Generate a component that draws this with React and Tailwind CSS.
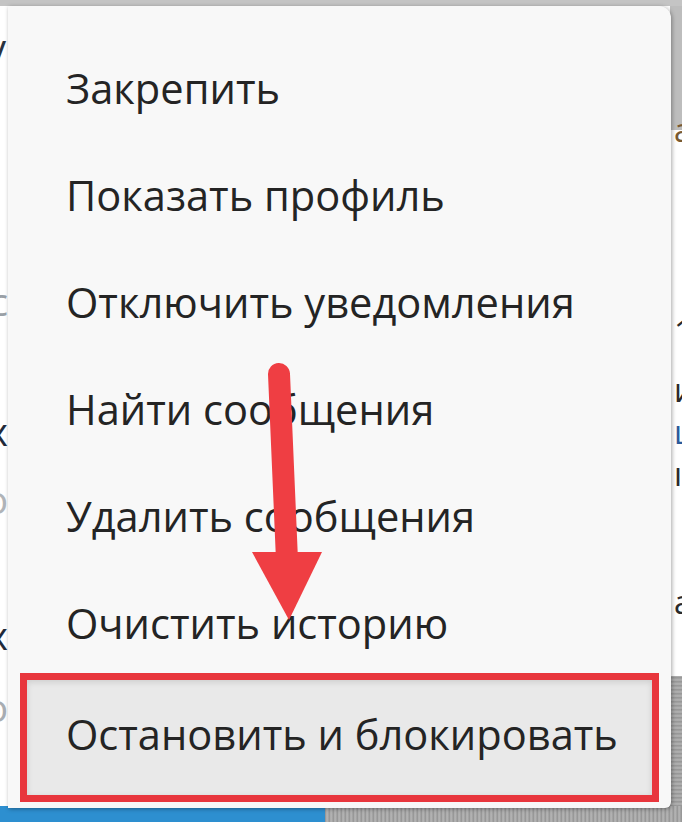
import React from 'react';

const items = [
    'Закрепить',
    'Показать профиль',
    'Отключить уведомления',
    'Найти сообщения',
    'Удалить сообщения',
    'Очистить историю',
];

const font = { fontFamily: '"Open Sans", "Noto Sans", sans-serif' };

const App = () => {
    return (
        <div className="relative w-[682px] h-[822px] overflow-hidden bg-white" style={font}>
            {/* page behind the menu */}
            <div className="flex flex-col h-full">
                <div className="h-[6px] bg-[#c4c4c4]"></div>
                <div className="flex flex-1">
                    <div className="w-[10px] flex flex-col items-end overflow-hidden text-[38px] leading-none">
                        <span className="mt-[22px] mr-[4px] text-[#2a3340]">у</span>
                        <span className="mt-[216px] mr-[2px] text-[#9aa0a6]">с</span>
                        <span className="mt-[92px] mr-[2px] text-[#1f2a3a]">х</span>
                        <span className="mt-[30px] mr-[2px] text-[#b0b4b8]">о</span>
                        <span className="mt-[98px] mr-[2px] text-[#1f2a3a]">х</span>
                        <span className="mt-[34px] mr-[2px] text-[#a8adb2]">о</span>
                    </div>
                    <div className="flex-1"></div>
                    <div className="w-[12px] flex flex-col overflow-hidden text-[32px] leading-none">
                        <div className="h-[124px] bg-[#bdbdbd]"></div>
                        <span className="-mt-[16px] ml-[4px] text-[#7a5a30]">а</span>
                        <span className="mt-[170px] ml-[4px] text-[#2a2a2a]">1</span>
                        <span className="mt-[26px] ml-[4px] text-[#2a2a2a]">и</span>
                        <span className="mt-[10px] ml-[4px] text-[#2b5a9a]">ц</span>
                        <span className="mt-[10px] ml-[4px] text-[#2a2a2a]">ı</span>
                        <span className="mt-[96px] ml-[4px] text-[#2a2a2a]">а</span>
                        <div className="mt-auto h-[130px] bg-[repeating-linear-gradient(0deg,#8f8f8f_0px,#b5b5b5_2px,#9a9a9a_4px)]"></div>
                    </div>
                </div>
                <div className="flex h-[16px]">
                    <div className="w-[325px] bg-[#2d8fd0]"></div>
                    <div className="flex-1 bg-[repeating-linear-gradient(90deg,#8d8d8d_0px,#b8b8b8_2px,#9d9d9d_4px)]"></div>
                </div>
            </div>

            {/* context menu */}
            <div className="absolute left-[8px] top-[6px] w-[663px] h-[802px] bg-[#f8f8f8] rounded-tr-[12px] rounded-br-[6px] shadow-[1px_1px_4px_rgba(0,0,0,0.35)] flex flex-col pt-[29px]">
                {items.map(label => (
                    <div key={label} className="h-[107px] flex items-center pl-[58px] text-[41.6px] font-medium text-[#242424] leading-none">
                        {label}
                    </div>
                ))}
                <div className="mt-[-4px] mx-[12px] h-[129px] border-[7px] border-[#e8363d] bg-[#e9e9e9] shadow-[inset_0_2px_6px_rgba(0,0,0,0.12)] flex items-center pb-[6px] pl-[39px] text-[41.6px] font-medium text-[#242424] leading-none">
                    Остановить и блокировать
                </div>
            </div>

            {/* annotation arrow */}
            <svg className="absolute left-0 top-0" width="682" height="822" viewBox="0 0 682 822">
                <line x1="279" y1="374" x2="287" y2="560" stroke="#ef3e43" strokeWidth="22" strokeLinecap="round" />
                <polygon points="252,552 322,552 289,620" fill="#ef3e43" />
            </svg>
        </div>
    );
};

export default App;
